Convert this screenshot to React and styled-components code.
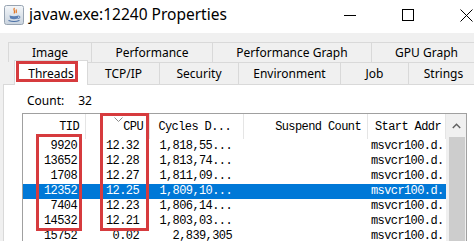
import React from 'react';
import styled, { createGlobalStyle } from 'styled-components';

const Global = createGlobalStyle`
  html, body { margin: 0; padding: 0; background: #f0f0f0; }
  body { width: 474px; height: 241px; overflow: hidden; }
`;

const Window = styled.div`
  position: relative;
  width: 474px;
  height: 241px;
  overflow: hidden;
  background: #f0f0f0;
  display: flex;
  flex-direction: column;
  font-family: "Noto Sans", "Open Sans", sans-serif;
  color: #000;
`;

const TitleBar = styled.div`
  height: 33px;
  flex-shrink: 0;
  background: #fff;
  display: flex;
  align-items: flex-start;
`;

const AppIcon = styled.svg`
  margin: 5px 0 0 4px;
  flex-shrink: 0;
`;

const Title = styled.div`
  margin: 3px 0 0 5px;
  font-size: 15.5px;
  line-height: 22px;
  white-space: nowrap;
`;

const Caption = styled.div`
  display: flex;
  margin-left: auto;
  margin-right: -21px;
  flex-shrink: 0;
`;

const CaptionButton = styled.div`
  width: 58px;
  height: 30px;
  display: flex;
  align-items: center;
  justify-content: center;
`;

const TabArea = styled.div`
  padding-top: 9px;
  display: flex;
  flex-direction: column;
  flex-shrink: 0;
`;

const TabRow = styled.div`
  display: flex;
  height: ${p => p.$h}px;
  padding-left: ${p => p.$indent}px;
  align-items: flex-end;
`;

const Tab = styled.div`
  flex-shrink: 0;
  width: ${p => p.$w}px;
  height: ${p => p.$h}px;
  box-sizing: border-box;
  border-top: 1px solid #d9d9d9;
  border-right: 1px solid #d9d9d9;
  border-left: ${p => (p.$first ? '1px solid #d9d9d9' : 'none')};
  background: #f0f0f0;
  font-size: 12px;
  display: flex;
  align-items: center;
  justify-content: center;
  white-space: nowrap;
`;

const SelectedTab = styled(Tab)`
  position: relative;
  z-index: 1;
  background: #fff;
  height: ${p => p.$h + 3}px;
  margin-bottom: -1px;
  border-left: 1px solid #d9d9d9;
  padding-top: 1px;
`;

const Panel = styled.div`
  flex: 1;
  min-height: 0;
  margin-left: 3px;
  background: #fff;
  border-top: 1px solid #d9d9d9;
  border-left: 1px solid #d9d9d9;
  padding: 8px 0 0 18px;
  display: flex;
  flex-direction: column;
`;

const CountRow = styled.div`
  display: flex;
  height: 15px;
  line-height: 15px;
  font-size: 12px;
  padding-left: 5px;
  gap: 14px;
`;

const ListBox = styled.div`
  margin-top: 5px;
  width: 445px;
  flex: 1;
  min-height: 0;
  box-sizing: border-box;
  border: 1px solid #a0a0a0;
  border-bottom: none;
  display: flex;
  overflow: hidden;
`;

const Viewport = styled.div`
  flex: 1;
  min-width: 0;
  overflow: hidden;
  font-family: "Liberation Mono", "DejaVu Sans Mono", monospace;
  font-size: 12px;
  letter-spacing: -0.6px;
`;

const COLS = '63px 64px 94px 124px 78px';

const HeaderRow = styled.div`
  display: grid;
  grid-template-columns: ${COLS};
  height: 25px;
`;

const HeaderCell = styled.div`
  position: relative;
  box-sizing: border-box;
  border-right: 1px solid #e5e5e5;
  display: flex;
  align-items: flex-end;
  justify-content: ${p => (p.$left ? 'flex-start' : 'flex-end')};
  padding: 0 ${p => p.$pr ?? 6}px 4px ${p => p.$pl ?? 0}px;
  line-height: 15px;
  white-space: nowrap;
  overflow: hidden;
`;

const SortArrow = styled.svg`
  position: absolute;
  top: 3px;
  left: 28px;
`;

const Row = styled.div`
  display: grid;
  grid-template-columns: ${COLS};
  height: 15px;
  line-height: 15px;
  background: ${p => (p.$selected ? '#0078d7' : 'transparent')};
  color: ${p => (p.$selected ? '#fff' : '#000')};
`;

const Cell = styled.div`
  white-space: nowrap;
  overflow: hidden;
  text-align: ${p => (p.$left ? 'left' : 'right')};
  padding: 0 ${p => p.$pr ?? 0}px 0 ${p => p.$pl ?? 0}px;
`;

const ScrollBar = styled.div`
  width: 20px;
  flex-shrink: 0;
  background: #f0f0f0;
  display: flex;
  flex-direction: column;
`;

const ScrollArrow = styled.div`
  height: 23px;
  display: flex;
  align-items: center;
  justify-content: center;
`;

const Thumb = styled.div`
  flex: 1;
  margin: 0 1px 0 3px;
  background: #cdcdcd;
`;

const Mark = styled.div`
  position: absolute;
  left: ${p => p.$x}px;
  top: ${p => p.$y}px;
  width: ${p => p.$w}px;
  height: ${p => p.$h}px;
  box-sizing: border-box;
  border: 3px solid #d63b3e;
  pointer-events: none;
  z-index: 5;
`;

const rows = [
  ['9920', '12.32', '1,818,55...'],
  ['13652', '12.28', '1,813,74...'],
  ['1708', '12.27', '1,811,09...'],
  ['12352', '12.25', '1,809,10...', true],
  ['7404', '12.23', '1,806,14...'],
  ['14532', '12.21', '1,803,03...'],
  ['15752', '0.02', '2,839,305'],
];

const row1 = [
  ['Image', 84],
  ['Performance', 121],
  ['Performance Graph', 159],
  ['GPU Graph', 110],
];

const row2 = [
  ['TCP/IP', 72],
  ['Security', 79],
  ['Environment', 102],
  ['Job', 68],
  ['Strings', 70],
];

function JavaIcon() {
  return (
    <AppIcon width="20" height="20" viewBox="0 0 20 20">
      <defs>
        <linearGradient id="ig" x1="0" y1="0" x2="0" y2="1">
          <stop offset="0" stopColor="#f4f7fa" />
          <stop offset="1" stopColor="#c9d3de" />
        </linearGradient>
      </defs>
      <rect x="0.5" y="0.5" width="19" height="19" rx="2" fill="url(#ig)" stroke="#98a4b2" />
      <path d="M10.5 3 C8.5 5 12 6 10 8.5 M12.5 4.5 C11.5 6 13 6.5 12 8" stroke="#e2731f" strokeWidth="1.2" fill="none" />
      <path d="M5.5 10.5 Q10 12 14.5 10.5 L13.8 13.5 Q10 15 6.2 13.5 Z" fill="#5a7fb5" />
      <path d="M14.3 11 Q16.5 11 15.8 12.8 Q15 13.6 13.8 13.4" stroke="#5a7fb5" strokeWidth="1" fill="none" />
      <path d="M4.5 15.5 Q10 17.5 15.5 15.5" stroke="#4a6fa5" strokeWidth="1.2" fill="none" />
    </AppIcon>
  );
}

export default function App() {
  return (
    <>
      <Global />
      <Window>
        <TitleBar>
          <JavaIcon />
          <Title>javaw.exe:12240 Properties</Title>
          <Caption>
            <CaptionButton>
              <svg width="12" height="12" viewBox="0 0 12 12">
                <path d="M0 6.5 H12" stroke="#000" strokeWidth="1" />
              </svg>
            </CaptionButton>
            <CaptionButton>
              <svg width="12" height="12" viewBox="0 0 12 12">
                <rect x="0.5" y="0.5" width="11" height="11" fill="none" stroke="#000" strokeWidth="1" />
              </svg>
            </CaptionButton>
            <CaptionButton>
              <svg width="13" height="13" viewBox="0 0 13 13">
                <path d="M0.5 0.5 L12.5 12.5 M12.5 0.5 L0.5 12.5" stroke="#000" strokeWidth="1" />
              </svg>
            </CaptionButton>
          </Caption>
        </TitleBar>

        <TabArea>
          <TabRow $h={20} $indent={8}>
            {row1.map(([t, w], i) => (
              <Tab key={t} $w={w} $h={20} $first={i === 0}>{t}</Tab>
            ))}
          </TabRow>
          <TabRow $h={22} $indent={14}>
            <SelectedTab $w={74} $h={22}>Threads</SelectedTab>
            {row2.map(([t, w]) => (
              <Tab key={t} $w={w} $h={22}>{t}</Tab>
            ))}
          </TabRow>
        </TabArea>

        <Panel>
          <CountRow>
            <span>Count:</span>
            <span>32</span>
          </CountRow>
          <ListBox>
            <Viewport>
              <HeaderRow>
                <HeaderCell>TID</HeaderCell>
                <HeaderCell>
                  <SortArrow width="9" height="5" viewBox="0 0 9 5">
                    <path d="M0.5 0.5 L4.5 4.5 L8.5 0.5" stroke="#8a8a8a" strokeWidth="1" fill="none" />
                  </SortArrow>
                  CPU
                </HeaderCell>
                <HeaderCell $pr={12}>Cycles D...</HeaderCell>
                <HeaderCell>Suspend Count</HeaderCell>
                <HeaderCell $left $pl={7} $pr={0}>Start Addr</HeaderCell>
              </HeaderRow>
              {rows.map(([tid, cpu, cyc, sel]) => (
                <Row key={tid} $selected={sel}>
                  <Cell $pr={9}>{tid}</Cell>
                  <Cell $pr={11}>{cpu}</Cell>
                  <Cell $pr={12}>{cyc}</Cell>
                  <Cell />
                  <Cell $left $pl={3}>msvcr100.d.</Cell>
                </Row>
              ))}
            </Viewport>
            <ScrollBar>
              <ScrollArrow>
                <svg width="9" height="6" viewBox="0 0 9 6">
                  <path d="M0.8 5 L4.5 1.2 L8.2 5" stroke="#606060" strokeWidth="1.4" fill="none" />
                </svg>
              </ScrollArrow>
              <Thumb />
            </ScrollBar>
          </ListBox>
        </Panel>

        <Mark $x={16} $y={61} $w={62} $h={21} />
        <Mark $x={36} $y={134} $w={46} $h={97} />
        <Mark $x={100} $y={113} $w={49} $h={118} />
      </Window>
    </>
  );
}
